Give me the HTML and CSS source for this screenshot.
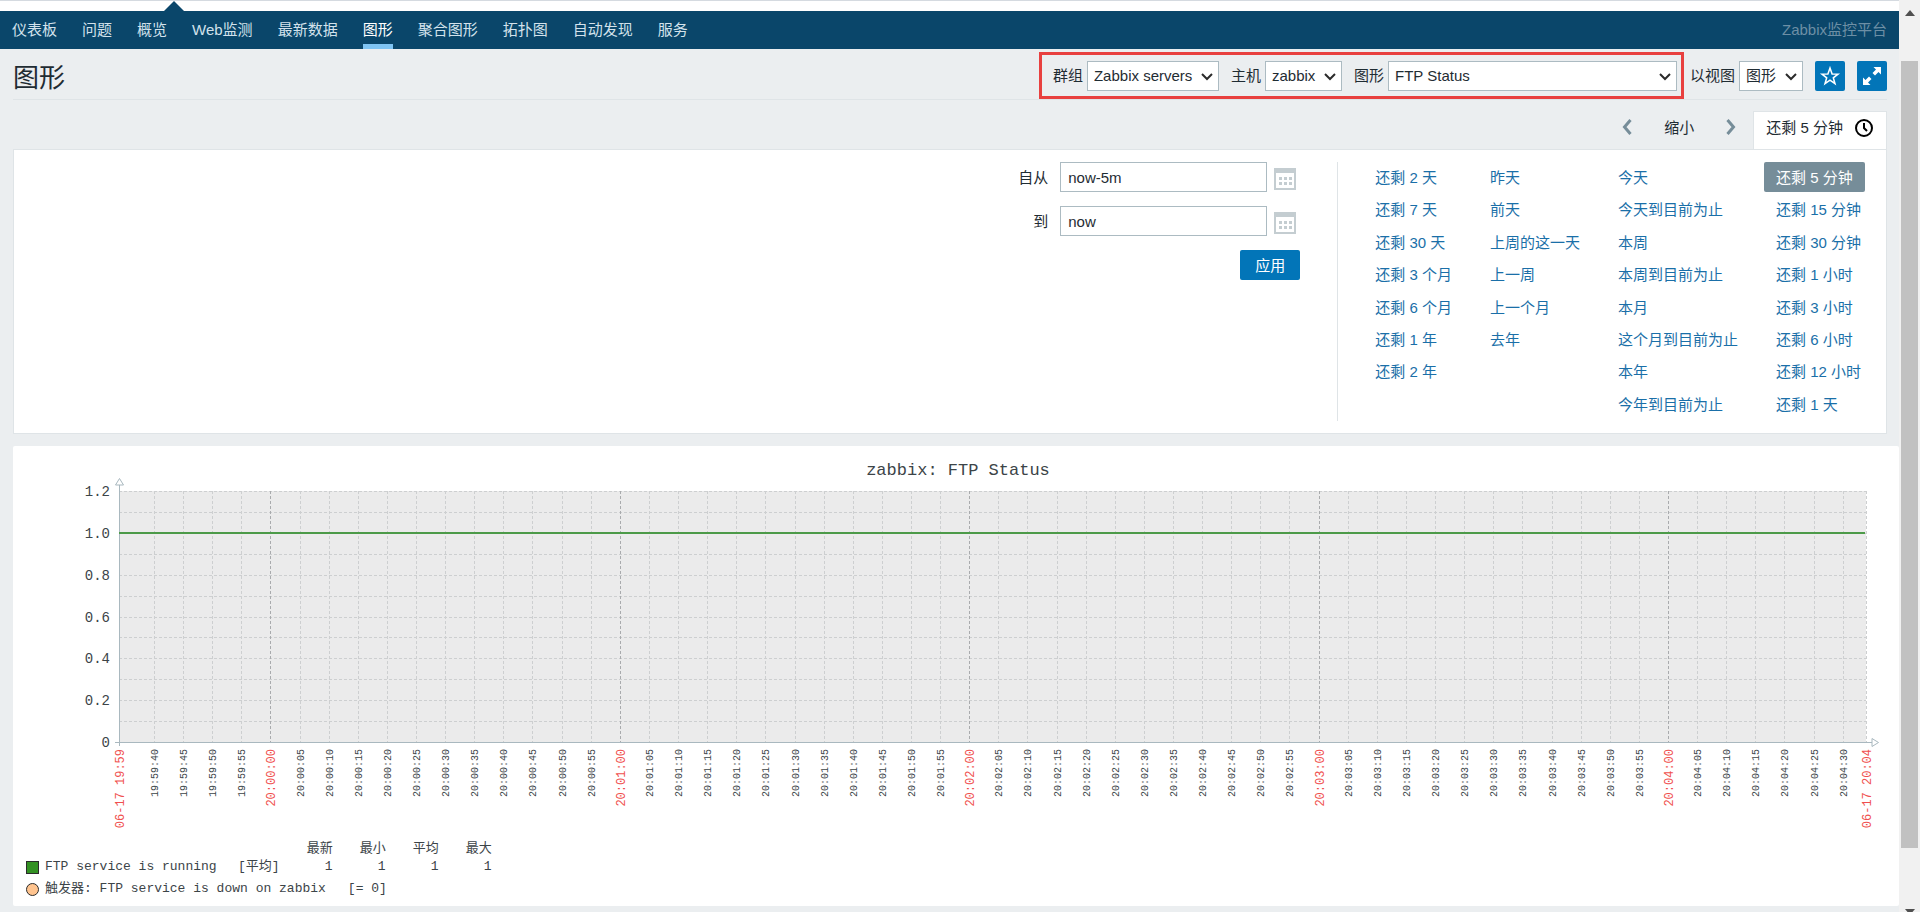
FILE: index.html
```html
<!DOCTYPE html>
<html lang="zh-CN">
<head>
<meta charset="utf-8">
<title>图形</title>
<link rel="stylesheet" href="styles.css">
</head>
<body>
<div class="page">
  <header class="top">
    <div class="top-strip"><svg class="notch" viewBox="0 0 20 10" aria-hidden="true"><path d="M0 10 10 0l10 10z"/></svg></div>
    <nav class="nav">
      <a href="#">仪表板</a>
      <a href="#">问题</a>
      <a href="#">概览</a>
      <a href="#">Web监测</a>
      <a href="#">最新数据</a>
      <a href="#" class="active" aria-current="page">图形</a>
      <a href="#">聚合图形</a>
      <a href="#">拓扑图</a>
      <a href="#">自动发现</a>
      <a href="#">服务</a>
      <span class="server-name">Zabbix监控平台</span>
    </nav>
  </header>

  <main class="content">
    <div class="title-bar">
      <h1>图形</h1>
      <div class="controls">
        <form class="selectors">
          <div class="field">
            <label for="group">群组</label>
            <span class="select"><select id="group"><option>Zabbix servers</option></select><svg viewBox="0 0 12 8" aria-hidden="true"><path d="M1 1l5 5 5-5"/></svg></span>
          </div>
          <div class="field">
            <label for="host">主机</label>
            <span class="select"><select id="host"><option>zabbix</option></select><svg viewBox="0 0 12 8" aria-hidden="true"><path d="M1 1l5 5 5-5"/></svg></span>
          </div>
          <div class="field">
            <label for="graph">图形</label>
            <span class="select wide"><select id="graph"><option>FTP Status</option></select><svg viewBox="0 0 12 8" aria-hidden="true"><path d="M1 1l5 5 5-5"/></svg></span>
          </div>
        </form>
        <div class="view">
          <div class="field">
            <label for="view">以视图</label>
            <span class="select"><select id="view"><option>图形</option></select><svg viewBox="0 0 12 8" aria-hidden="true"><path d="M1 1l5 5 5-5"/></svg></span>
          </div>
          <button class="icon-btn" type="button" aria-label="收藏"><svg viewBox="0 0 30 30"><path class="line" d="M15 7l2.100 6 5.900.100-4.700 3.700 1.700 5.900-5-3.500-5 3.500 1.700-5.900L7 13.100l5.900-.100z"/></svg></button>
          <button class="icon-btn" type="button" aria-label="全屏"><svg viewBox="0 0 30 30"><path d="M16.500 6H24v7.500l-2.500-2.500-3.500 3.500-2.500-2.500L19 8.500zM6 16.500l2.500 2.500L12 15.500l2.500 2.500L11 21.500l2.500 2.500H6z"/></svg></button>
        </div>
      </div>
    </div>

    <div class="time-nav">
      <button class="arrow" type="button" aria-label="上一段"><svg viewBox="0 0 10 18"><path d="M8.500 2L2.500 9l6 7"/></svg></button>
      <button class="zoom-out" type="button">缩小</button>
      <button class="arrow" type="button" aria-label="下一段"><svg viewBox="0 0 10 18"><path d="M1.500 2l6 7-6 7"/></svg></button>
      <a href="#" class="time-tab">还剩 5 分钟<svg viewBox="0 0 20 20" aria-hidden="true"><circle cx="10" cy="10" r="8"/><path d="M10 5v5l3 3"/></svg></a>
    </div>

    <section class="filter">
      <form class="range">
        <label for="from">自从</label>
        <input id="from" type="text" value="now-5m">
        <button class="cal" type="button" aria-label="选择开始日期"><svg viewBox="0 0 22 22"><path class="frame" d="M1 1h20v20H1z"/><path class="bar" d="M0 0h22v5H0z"/><path class="dots" d="M5 9h3v3H5zM10 9h3v3h-3zM15 9h3v3h-3zM5 14h3v3H5zM10 14h3v3h-3zM15 14h3v3h-3z"/></svg></button>
        <label for="to">到</label>
        <input id="to" type="text" value="now">
        <button class="cal" type="button" aria-label="选择结束日期"><svg viewBox="0 0 22 22"><path class="frame" d="M1 1h20v20H1z"/><path class="bar" d="M0 0h22v5H0z"/><path class="dots" d="M5 9h3v3H5zM10 9h3v3h-3zM15 9h3v3h-3zM5 14h3v3H5zM10 14h3v3h-3zM15 14h3v3h-3z"/></svg></button>
        <button class="apply" type="button">应用</button>
      </form>
      <div class="quick">
        <ul>
          <li><a href="#">还剩 2 天</a></li>
          <li><a href="#">还剩 7 天</a></li>
          <li><a href="#">还剩 30 天</a></li>
          <li><a href="#">还剩 3 个月</a></li>
          <li><a href="#">还剩 6 个月</a></li>
          <li><a href="#">还剩 1 年</a></li>
          <li><a href="#">还剩 2 年</a></li>
        </ul>
        <ul>
          <li><a href="#">昨天</a></li>
          <li><a href="#">前天</a></li>
          <li><a href="#">上周的这一天</a></li>
          <li><a href="#">上一周</a></li>
          <li><a href="#">上一个月</a></li>
          <li><a href="#">去年</a></li>
        </ul>
        <ul>
          <li><a href="#">今天</a></li>
          <li><a href="#">今天到目前为止</a></li>
          <li><a href="#">本周</a></li>
          <li><a href="#">本周到目前为止</a></li>
          <li><a href="#">本月</a></li>
          <li><a href="#">这个月到目前为止</a></li>
          <li><a href="#">本年</a></li>
          <li><a href="#">今年到目前为止</a></li>
        </ul>
        <ul>
          <li><a href="#" class="selected">还剩 5 分钟</a></li>
          <li><a href="#">还剩 15 分钟</a></li>
          <li><a href="#">还剩 30 分钟</a></li>
          <li><a href="#">还剩 1 小时</a></li>
          <li><a href="#">还剩 3 小时</a></li>
          <li><a href="#">还剩 6 小时</a></li>
          <li><a href="#">还剩 12 小时</a></li>
          <li><a href="#">还剩 1 天</a></li>
        </ul>
      </div>
    </section>

    <section class="graph">
      <svg class="chart" id="chart" viewBox="0 0 1886 394" role="img" aria-label="zabbix: FTP Status"></svg>
      <table class="legend">
        <thead>
          <tr><td class="name"></td><td class="func"></td><th>最新</th><th>最小</th><th>平均</th><th>最大</th></tr>
        </thead>
        <tbody>
          <tr>
            <td class="name"><span class="item"><span class="square"></span>FTP service is running</span></td>
            <td class="func">[平均]</td><td>1</td><td>1</td><td>1</td><td>1</td>
          </tr>
        </tbody>
      </table>
      <p class="trigger"><span class="circle"></span><span>触发器: FTP service is down on zabbix</span><span class="cond">[= 0]</span></p>
    </section>
  </main>
</div>
<div class="scrollbar" aria-hidden="true">
  <svg class="up" viewBox="0 0 10 6"><path d="M0 6l5-6 5 6z"/></svg>
  <div class="thumb"></div>
  <svg class="down" viewBox="0 0 10 6"><path d="M0 0h10L5 6z"/></svg>
</div>
<script src="chart.js"></script>
</body>
</html>
```

FILE: styles.css
```css
* { box-sizing: border-box; }

body {
  margin: 0;
  display: flex;
  height: 100vh;
  overflow: hidden;
  background: #ebeef0;
  color: #1f2c33;
  font: 15px/20px "Liberation Sans", "Noto Sans CJK SC", sans-serif;
}

button, input, select { font: inherit; color: inherit; }
button { border: 0; padding: 0; background: none; cursor: pointer; }
a { text-decoration: none; color: inherit; }

.page { flex: 1; min-width: 0; }

/* top navigation */
.top-strip {
  height: 11px;
  padding-left: 164px;
  background: #fff;
  border-top: 1px solid #d5dae0;
}
.notch { display: block; width: 20px; height: 10px; fill: #0a466a; }

.nav {
  display: flex;
  gap: 25px;
  height: 38px;
  padding: 0 12px;
  background: #0a466a;
  color: #d3e2ec;
}
.nav a {
  padding: 9px 0 4px;
  border-bottom: 5px solid transparent;
  white-space: nowrap;
}
.nav .active { color: #fff; border-bottom-color: #7fc4f3; }
.server-name { margin-left: auto; padding-top: 9px; color: #6d8fa5; }

/* title row */
.content { padding-left: 13px; }
.title-bar {
  display: flex;
  justify-content: space-between;
  align-items: flex-end;
  height: 51px;
  margin-right: 12px;
  border-bottom: 1px solid #dfe4e7;
}
h1 { margin: 0 0 5px; font-size: 26px; line-height: 32px; font-weight: 400; }
.controls { display: flex; align-items: flex-end; gap: 6px; }
.selectors {
  display: flex;
  gap: 12px;
  padding: 6px 4px 5px 11px;
  border: 3px solid #e8403f;
}
.view { display: flex; gap: 12px; padding-bottom: 8px; }
.field { display: flex; align-items: center; gap: 4px; white-space: nowrap; }
.select { position: relative; }
.select select {
  appearance: none;
  display: block;
  width: 100%;
  height: 30px;
  padding: 0 25px 0 6px;
  border: 1px solid #acbbc2;
  border-radius: 0;
  background: #fff;
}
.select svg {
  position: absolute;
  right: 6px;
  top: 12px;
  width: 12px;
  height: 8px;
  fill: none;
  stroke: #2b2b2b;
  stroke-width: 2;
  pointer-events: none;
}
.select.wide { width: 289px; }
.icon-btn { width: 30px; height: 30px; border-radius: 2px; background: #0275b8; }
.icon-btn svg { display: block; fill: #fff; }
.icon-btn .line { fill: none; stroke: #fff; stroke-width: 1.5; }

/* time navigation */
.time-nav {
  display: flex;
  justify-content: flex-end;
  align-items: center;
  height: 49px;
  padding: 11px 12px 0 0;
}
.arrow svg { display: block; width: 10px; height: 18px; fill: none; stroke: #768d99; stroke-width: 3; }
.arrow { margin-bottom: 6px; }
.zoom-out { margin: 0 32px 5px; }
.time-tab {
  display: flex;
  gap: 11px;
  height: 38px;
  margin-left: 17px;
  padding: 6px 12px;
  border: 1px solid #dfe4e7;
  border-bottom: 0;
  background: #fff;
}
.time-tab svg { width: 20px; height: 20px; fill: none; stroke: #000; stroke-width: 2; }

/* time filter */
.filter {
  display: flex;
  justify-content: flex-end;
  margin-right: 12px;
  padding: 12px 13px 12px 0;
  border: 1px solid #dfe4e7;
  background: #fff;
}
.range {
  display: grid;
  grid-template-columns: auto 207px 33px;
  grid-template-rows: repeat(3, 30px);
  gap: 14px 0;
  padding-right: 37px;
}
.range label { padding: 6px 12px 4px; text-align: right; }
.range input {
  width: 100%;
  padding: 1px 7px 0;
  border: 1px solid #acbbc2;
  background: #fff;
}
.cal { display: flex; align-items: center; padding: 3px 0 0 7px; }
.cal svg { width: 22px; height: 22px; }
.cal .frame { fill: #fff; stroke: #c4cdd1; stroke-width: 2; }
.cal .bar, .cal .dots { fill: #c4cdd1; }
.apply {
  grid-column: 2 / 4;
  justify-self: end;
  width: 60px;
  padding-top: 1px;
  border-radius: 2px;
  background: #0275b8;
  color: #fff;
}
.quick {
  display: flex;
  gap: 14px;
  padding-left: 25px;
  border-left: 1px solid #dfe4e7;
}
.quick ul {
  display: grid;
  grid-template-rows: repeat(8, 1fr);
  height: 259px;
  margin: 0;
  padding: 0;
  list-style: none;
}
.quick a {
  display: inline-block;
  padding: 6px 12px 4px;
  border-radius: 2px;
  color: #1a6fa8;
  white-space: nowrap;
}
.quick .selected { background: #768d99; color: #fff; }

/* graph */
.graph {
  margin-top: 12px;
  padding-bottom: 8px;
  border-radius: 2px;
  background: #fff;
  color: #3c4448;
  font: 13px/18px "Liberation Mono", "Noto Sans CJK SC", monospace;
  white-space: nowrap;
}
.chart { display: block; width: 100%; font-family: "Liberation Mono", monospace; }
.chart text { fill: #3c4448; }
.chart .title { font-size: 17px; text-anchor: middle; }
.chart .value { font-size: 14px; text-anchor: end; }
.chart .time { font-size: 10px; text-anchor: end; }
.chart .major { font-size: 12px; text-anchor: end; fill: #f0504e; }
.chart .plot { fill: #ebebeb; }
.chart .grid { stroke: #cdcfd0; stroke-dasharray: 3 2; }
.chart .grid-major { stroke: #a9abad; stroke-dasharray: 3 2; }
.chart .axis { stroke: #a9b8bf; fill: #fff; }
.chart .series { stroke: #4c9a48; stroke-width: 2; }

.legend { margin-left: 13px; border-collapse: collapse; }
.legend th, .legend td { padding: 0; font-weight: 400; text-align: right; min-width: 53px; }
.legend .name { min-width: 190px; text-align: left; }
.legend .func { min-width: 63px; }
.item, .trigger { display: flex; align-items: center; gap: 6px; }
.trigger { margin: 4px 0 0 13px; }
.cond { margin-left: 16px; }
.square, .circle { width: 13px; height: 13px; border: 1px solid #2b2b2b; }
.square { background: #339123; }
.circle { border-radius: 50%; background: #ffc48f; }

/* window scrollbar */
.scrollbar {
  display: flex;
  flex-direction: column;
  align-items: center;
  width: 21px;
  background: #f1f1f1;
}
.up, .down { flex: none; width: 10px; height: 6px; fill: #505050; }
.up { margin: 10px 0 45px; }
.thumb { flex: 1; width: 17px; margin-bottom: 61px; background: #c1c1c1; }
.down { margin-bottom: -3px; }
```

FILE: chart.js
```js
const svg = document.getElementById("chart");
const NS = "http://www.w3.org/2000/svg";

const plot = { left: 106, right: 1853, top: 45, bottom: 296 };
const startSecond = 19 * 3600 + 59 * 60 + 34;
const span = 300;

function add(tag, attrs, text) {
  const el = document.createElementNS(NS, tag);
  for (const key in attrs) el.setAttribute(key, attrs[key]);
  if (text) el.textContent = text;
  svg.appendChild(el);
}

function line(x1, y1, x2, y2, cls) {
  add("line", { x1, y1, x2, y2, class: cls });
}

function verticalLabel(x, text, cls, shift) {
  add("text", { transform: `translate(${x + shift} ${plot.bottom + 7}) rotate(-90)`, class: cls }, text);
}

function clock(seconds) {
  const parts = [Math.floor(seconds / 3600), Math.floor(seconds / 60) % 60, seconds % 60];
  return parts.map((n) => String(n).padStart(2, "0")).join(":");
}

add("text", { x: 945, y: 29, class: "title" }, "zabbix: FTP Status");
add("rect", { x: plot.left, y: plot.top, width: plot.right - plot.left, height: plot.bottom - plot.top, class: "plot" });

// horizontal grid and value labels
for (let i = 0; i <= 12; i++) {
  const y = Math.round(plot.bottom - (i / 12) * (plot.bottom - plot.top)) + 0.5;
  if (i > 0) line(plot.left, y, plot.right, y, "grid");
  if (i % 2 === 0) add("text", { x: 97, y: y + 4, class: "value" }, i ? (i / 10).toFixed(1) : "0");
}

// vertical grid and time labels every five seconds
for (let t = startSecond + 6; t < startSecond + span; t += 5) {
  const x = Math.round(plot.left + ((t - startSecond) / span) * (plot.right - plot.left)) + 0.5;
  const major = t % 60 === 0;
  line(x, plot.top, x, plot.bottom, major ? "grid-major" : "grid");
  verticalLabel(x, clock(t), major ? "major" : "time", major ? 4 : 3);
}
line(plot.right + 0.5, plot.top, plot.right + 0.5, plot.bottom, "grid");
verticalLabel(plot.left, "06-17 19:59", "major", 5);
verticalLabel(plot.right, "06-17 20:04", "major", 5);

// axes
line(plot.left + 0.5, plot.top - 6, plot.left + 0.5, plot.bottom + 4, "axis");
line(plot.left - 4, plot.bottom + 0.5, plot.right + 6, plot.bottom + 0.5, "axis");
add("path", { d: `M${plot.left - 3.5} ${plot.top - 6}h8l-4-6.500z`, class: "axis" });
add("path", { d: `M${plot.right + 6} ${plot.bottom - 3.5}v8l6.500-4z`, class: "axis" });

line(plot.left, 87, plot.right - 1, 87, "series");
```
